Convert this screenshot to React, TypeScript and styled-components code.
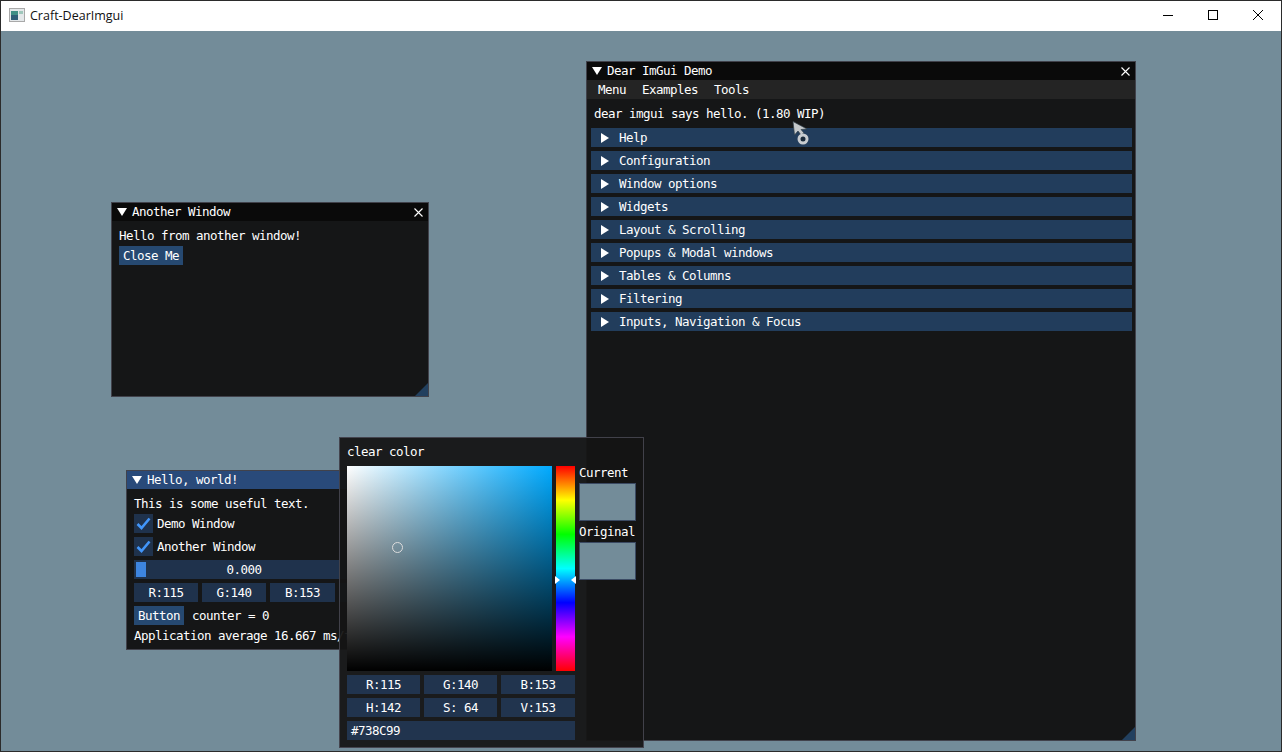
import React from 'react';
import styled, { createGlobalStyle } from 'styled-components';

const GlobalStyle = createGlobalStyle`
  html, body {
    margin: 0;
    padding: 0;
    width: 1282px;
    height: 752px;
    overflow: hidden;
    background: #738c99;
  }
`;

const Frame = styled.div`
  display: flex;
  flex-direction: column;
  width: 1282px;
  height: 752px;
  box-sizing: border-box;
  border: 1px solid #2b2b2b;
`;

const OsBar = styled.div`
  display: flex;
  align-items: center;
  height: 30px;
  box-sizing: border-box;
  padding: 0 1px 2px 0;
  background: #fff;
  flex-shrink: 0;
`;

const OsIcon = styled.svg`
  margin-left: 8px;
  width: 16px;
  height: 16px;
`;

const OsTitle = styled.span`
  margin-left: 5px;
  flex: 1;
  font: 12.5px 'Open Sans', 'Noto Sans', sans-serif;
  color: #111;
`;

const OsButton = styled.div`
  display: flex;
  align-items: center;
  justify-content: center;
  width: 45px;
  height: 28px;
`;

const Desktop = styled.div`
  position: relative;
  flex: 1;
  background: #738c99;
  font-family: 'DejaVu Sans Mono', monospace;
  font-size: 12.5px;
  letter-spacing: -0.525px;
  line-height: 13px;
  color: #fff;
  overflow: hidden;
`;

const Win = styled.div<{ $x: number; $y: number; $w: number; $h: number; $popup?: boolean }>`
  position: absolute;
  left: ${(p) => p.$x}px;
  top: ${(p) => p.$y}px;
  width: ${(p) => p.$w}px;
  height: ${(p) => p.$h}px;
  box-sizing: border-box;
  display: flex;
  flex-direction: column;
  background: ${(p) => (p.$popup ? 'rgba(20, 20, 20, 0.94)' : 'rgba(15, 15, 15, 0.94)')};
  border: 1px solid rgba(110, 110, 128, 0.5);
  overflow: hidden;
`;

const TitleRow = styled.div<{ $active?: boolean }>`
  display: flex;
  align-items: center;
  height: 18px;
  flex-shrink: 0;
  padding: 0 5px;
  background: ${(p) => (p.$active ? '#294a7a' : '#0a0a0a')};
`;

const TitleText = styled.span`
  margin: -2px 0 0 5px;
  flex: 1;
  white-space: pre;
`;

const MenuBar = styled.div`
  display: flex;
  align-items: center;
  height: 19px;
  flex-shrink: 0;
  gap: 16px;
  padding: 0 11px;
  background: #242424;
`;

const Content = styled.div`
  display: flex;
  flex-direction: column;
  align-items: flex-start;
  gap: 4px;
  padding: 8px 7px;
  white-space: pre;
`;

const PopupContent = styled(Content)`
  padding-top: 7px;
`;

const HeaderList = styled.div`
  display: flex;
  flex-direction: column;
  align-self: stretch;
  gap: 4px;
  margin: 4px -4px 0 -3px;
`;

const Header = styled.div`
  display: flex;
  align-items: center;
  height: 19px;
  padding-left: 9px;
  background: rgba(66, 150, 250, 0.31);
`;

const HeaderLabel = styled.span`
  margin-left: 9px;
`;

const Button = styled.div`
  display: flex;
  align-items: center;
  height: 19px;
  padding: 0 4px;
  background: rgba(66, 150, 250, 0.4);
`;

const Row = styled.div`
  display: flex;
  align-items: center;
  gap: 4px;
`;

const CheckBox = styled.div`
  display: flex;
  align-items: center;
  justify-content: center;
  width: 19px;
  height: 19px;
  background: rgba(41, 74, 122, 0.54);
`;

const Slider = styled.div`
  position: relative;
  display: flex;
  align-items: center;
  justify-content: center;
  width: 220px;
  height: 19px;
  background: rgba(41, 74, 122, 0.54);
`;

const SliderGrab = styled.div`
  position: absolute;
  left: 2px;
  top: 2px;
  width: 10px;
  height: 15px;
  background: #3d85e0;
`;

const Field = styled.div<{ $w: number; $left?: boolean }>`
  display: flex;
  align-items: center;
  justify-content: ${(p) => (p.$left ? 'flex-start' : 'center')};
  width: ${(p) => p.$w}px;
  height: 19px;
  box-sizing: border-box;
  padding: 0 ${(p) => (p.$left ? 4 : 0)}px;
  background: rgba(41, 74, 122, 0.54);
`;

const CounterText = styled.span`
  margin-left: 4px;
`;

const Grip = styled.svg`
  position: absolute;
  right: 0;
  bottom: 0;
  width: 13px;
  height: 13px;
`;

const PickerRow = styled.div`
  display: flex;
  gap: 4px;
  margin-top: 4px;
`;

const SvSquare = styled.div`
  position: relative;
  width: 205px;
  height: 205px;
  background: linear-gradient(to bottom, rgba(0, 0, 0, 0), #000), linear-gradient(to right, #fff, #00aaff);
`;

const SvCursor = styled.div`
  position: absolute;
  left: 45px;
  top: 76px;
  width: 9px;
  height: 9px;
  border: 1.5px solid #ddd;
  border-radius: 50%;
`;

const HueBar = styled.div`
  position: relative;
  width: 19px;
  height: 205px;
  background: linear-gradient(to bottom, #f00, #ff0 16.67%, #0f0 33.33%, #0ff 50%, #00f 66.67%, #f0f 83.33%, #f00);
`;

const HueArrow = styled.svg<{ $right?: boolean }>`
  position: absolute;
  top: 110px;
  ${(p) => (p.$right ? 'right: -1px;' : 'left: -1px;')}
  width: 5px;
  height: 8px;
`;

const SwatchColumn = styled.div`
  display: flex;
  flex-direction: column;
  gap: 4px;
`;

const Swatch = styled.div`
  width: 57px;
  height: 38px;
  box-sizing: border-box;
  background: #738c99;
  border: 1px solid #3b4a63;
`;

const FieldRow = styled.div`
  display: flex;
  gap: 4px;
`;

const FieldStack = styled.div`
  display: flex;
  flex-direction: column;
  gap: 4px;
`;

const BusyCursor = styled.svg`
  position: absolute;
  left: 789px;
  top: 89px;
  width: 22px;
  height: 26px;
`;

const ArrowIcon = styled.svg`
  flex-shrink: 0;
  width: 10px;
  height: 10px;
`;

const Arrow = ({ open }: { open?: boolean }) => (
  <ArrowIcon viewBox="0 0 10 10">
    <path d={open ? 'M0 1H10L5 9Z' : 'M1 0L9 5L1 10Z'} fill="#fff" />
  </ArrowIcon>
);

const CloseX = () => (
  <svg width="9" height="9" viewBox="0 0 9 9">
    <path d="M0.5 0.5L8.5 8.5M8.5 0.5L0.5 8.5" stroke="#fff" strokeWidth="1.1" fill="none" />
  </svg>
);

const Check = () => (
  <svg width="15" height="13" viewBox="0 0 15 13">
    <path d="M1.5 7L5.5 11L13.5 1.5" stroke="#4296fa" strokeWidth="2.6" fill="none" />
  </svg>
);

const ResizeGrip = () => (
  <Grip viewBox="0 0 13 13">
    <path d="M13 0V13H0Z" fill="#22405f" />
  </Grip>
);

const headers = [
  'Help',
  'Configuration',
  'Window options',
  'Widgets',
  'Layout & Scrolling',
  'Popups & Modal windows',
  'Tables & Columns',
  'Filtering',
  'Inputs, Navigation & Focus',
];

const App = () => (
  <>
    <GlobalStyle />
    <Frame>
      <OsBar>
        <OsIcon viewBox="0 0 16 16">
          <rect x="0.5" y="1.5" width="15" height="13" fill="#e4e8ea" stroke="#a9a9a9" />
          <rect x="2" y="4" width="7" height="9" fill="#3f8f86" />
          <rect x="2" y="8" width="7" height="5" fill="#2f5d78" />
          <rect x="10" y="4" width="4" height="3" fill="#9fc7bb" />
        </OsIcon>
        <OsTitle>Craft-DearImgui</OsTitle>
        <OsButton>
          <svg width="10" height="10" viewBox="0 0 10 10">
            <path d="M0 5.5H10" stroke="#000" strokeWidth="1" />
          </svg>
        </OsButton>
        <OsButton>
          <svg width="10" height="10" viewBox="0 0 10 10">
            <rect x="0.5" y="0.5" width="9" height="9" fill="none" stroke="#000" />
          </svg>
        </OsButton>
        <OsButton>
          <svg width="10" height="10" viewBox="0 0 10 10">
            <path d="M0 0L10 10M10 0L0 10" stroke="#000" strokeWidth="1" />
          </svg>
        </OsButton>
      </OsBar>
      <Desktop>
        <Win $x={110} $y={171} $w={318} $h={195}>
          <TitleRow>
            <Arrow open />
            <TitleText>Another Window</TitleText>
            <CloseX />
          </TitleRow>
          <Content>
            <span>Hello from another window!</span>
            <Button>Close Me</Button>
          </Content>
          <ResizeGrip />
        </Win>

        <Win $x={585} $y={30} $w={550} $h={680}>
          <TitleRow>
            <Arrow open />
            <TitleText>Dear ImGui Demo</TitleText>
            <CloseX />
          </TitleRow>
          <MenuBar>
            <span>Menu</span>
            <span>Examples</span>
            <span>Tools</span>
          </MenuBar>
          <Content>
            <span>dear imgui says hello. (1.80 WIP)</span>
            <HeaderList>
              {headers.map((h) => (
                <Header key={h}>
                  <Arrow />
                  <HeaderLabel>{h}</HeaderLabel>
                </Header>
              ))}
            </HeaderList>
          </Content>
          <ResizeGrip />
        </Win>

        <Win $x={125} $y={439} $w={350} $h={180}>
          <TitleRow $active>
            <Arrow open />
            <TitleText>Hello, world!</TitleText>
          </TitleRow>
          <Content>
            <span>This is some useful text.</span>
            <Row>
              <CheckBox><Check /></CheckBox>
              <span>Demo Window</span>
            </Row>
            <Row>
              <CheckBox><Check /></CheckBox>
              <span>Another Window</span>
            </Row>
            <Slider>
              <SliderGrab />
              0.000
            </Slider>
            <Row>
              <Field $w={64}>R:115</Field>
              <Field $w={64}>G:140</Field>
              <Field $w={65}>B:153</Field>
              <Field $w={64} />
            </Row>
            <Row>
              <Button>Button</Button>
              <CounterText>counter = 0</CounterText>
            </Row>
            <span>Application average 16.667 ms/frame (60.0 FPS)</span>
          </Content>
        </Win>

        <Win $x={338} $y={406} $w={305} $h={311} $popup>
          <PopupContent>
            <span>clear color</span>
            <PickerRow>
              <SvSquare>
                <SvCursor />
              </SvSquare>
              <HueBar>
                <HueArrow viewBox="0 0 5 8">
                  <path d="M0 0L5 4L0 8Z" fill="#fff" />
                </HueArrow>
                <HueArrow $right viewBox="0 0 5 8">
                  <path d="M5 0L0 4L5 8Z" fill="#fff" />
                </HueArrow>
              </HueBar>
              <SwatchColumn>
                <span>Current</span>
                <Swatch />
                <span>Original</span>
                <Swatch />
              </SwatchColumn>
            </PickerRow>
            <FieldStack>
              <FieldRow>
                <Field $w={73}>R:115</Field>
                <Field $w={73}>G:140</Field>
                <Field $w={74}>B:153</Field>
              </FieldRow>
              <FieldRow>
                <Field $w={73}>H:142</Field>
                <Field $w={73}>S: 64</Field>
                <Field $w={74}>V:153</Field>
              </FieldRow>
              <Field $w={228} $left>#738C99</Field>
            </FieldStack>
          </PopupContent>
        </Win>

        <BusyCursor viewBox="0 0 22 26">
          <path d="M3 1.5L4.5 15L8 11L11 15L14 13L11 9.5L17 9Z" fill="#c4c8cb" stroke="#2f3d48" strokeWidth="0.7" />
          <circle cx="13" cy="19" r="4" fill="#1a2a3a" stroke="#c8ccd0" strokeWidth="3" />
        </BusyCursor>
      </Desktop>
    </Frame>
  </>
);

export default App;
